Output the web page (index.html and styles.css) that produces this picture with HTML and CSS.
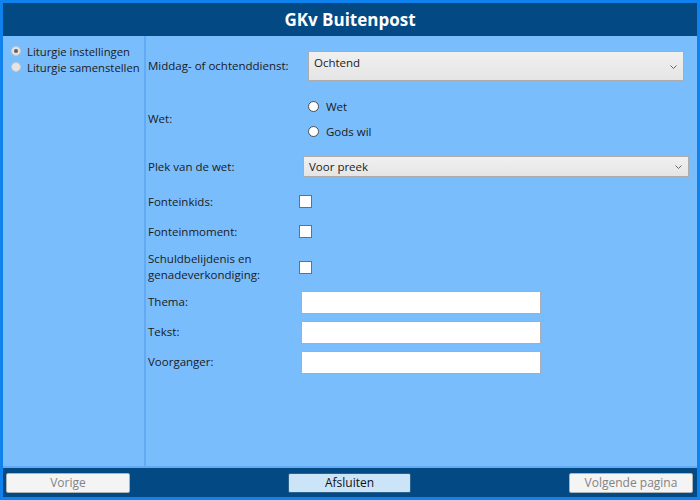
FILE: index.html
```html
<!DOCTYPE html>
<html lang="nl">
<head>
  <meta charset="UTF-8">
  <title>GKv Buitenpost</title>
  <link rel="stylesheet" href="styles.css">
</head>
<body>
  <div class="window">
    <header class="titlebar">GKv Buitenpost</header>

    <div class="content">
      <nav class="sidebar">
        <div class="navitem"><span class="dot checked"></span>Liturgie instellingen</div>
        <div class="navitem"><span class="dot"></span>Liturgie samenstellen</div>
      </nav>

      <main class="form">
        <div class="row r-dienst">
          <span class="label">Middag- of ochtenddienst:</span>
          <div class="combo combo-dienst">
            <span>Ochtend</span>
            <svg class="chev" width="7" height="4" viewBox="0 0 7 4"><path d="M0.5 0.5 L3.5 3.5 L6.5 0.5" fill="none" stroke="#666" stroke-width="1"/></svg>
          </div>
        </div>

        <div class="row r-wet">
          <span class="label">Wet:</span>
          <div class="radios">
            <div class="opt"><span class="radio"></span>Wet</div>
            <div class="opt"><span class="radio"></span>Gods wil</div>
          </div>
        </div>

        <div class="row r-plek">
          <span class="label">Plek van de wet:</span>
          <div class="combo combo-plek">
            <span>Voor preek</span>
            <svg class="chev" width="7" height="4" viewBox="0 0 7 4"><path d="M0.5 0.5 L3.5 3.5 L6.5 0.5" fill="none" stroke="#666" stroke-width="1"/></svg>
          </div>
        </div>

        <div class="row r-kids">
          <span class="label">Fonteinkids:</span>
          <span class="check"></span>
        </div>

        <div class="row r-moment">
          <span class="label">Fonteinmoment:</span>
          <span class="check"></span>
        </div>

        <div class="row r-schuld">
          <span class="label">Schuldbelijdenis en<br>genadeverkondiging:</span>
          <span class="check"></span>
        </div>

        <div class="row r-text">
          <span class="label">Thema:</span>
          <span class="textbox"></span>
        </div>

        <div class="row r-text">
          <span class="label">Tekst:</span>
          <span class="textbox"></span>
        </div>

        <div class="row r-text">
          <span class="label">Voorganger:</span>
          <span class="textbox"></span>
        </div>
      </main>
    </div>

    <footer class="buttons">
      <button class="btn" disabled>Vorige</button>
      <button class="btn primary">Afsluiten</button>
      <button class="btn" disabled>Volgende pagina</button>
    </footer>
  </div>
</body>
</html>
```

FILE: styles.css
```css
body {
  margin: 0;
  font-family: 'Open Sans', 'Noto Sans', sans-serif;
  font-size: 11.5px;
  color: #1b1b1b;
}
.window {
  width: 700px;
  height: 500px;
  box-sizing: border-box;
  border: 3px solid #0f82ee;
  display: flex;
  flex-direction: column;
  background: #7abdfd;
}
.titlebar {
  height: 33px;
  background: #034a85;
  color: white;
  font-weight: bold;
  font-size: 17px;
  display: flex;
  align-items: center;
  justify-content: center;
}
.content {
  flex: 1;
  display: flex;
}
.sidebar {
  width: 143px;
  flex-shrink: 0;
  border-right: 2px solid #62aaf3;
  padding: 7px 0 0 8px;
  box-sizing: border-box;
  font-size: 11.3px;
}
.navitem {
  display: flex;
  align-items: center;
  height: 16px;
}
.dot {
  width: 10px;
  height: 10px;
  border-radius: 50%;
  background: #e4e4e4;
  border: 1px solid #c8c8c8;
  margin-right: 6px;
  box-sizing: border-box;
  display: flex;
  align-items: center;
  justify-content: center;
}
.dot.checked::after {
  content: '';
  width: 4px;
  height: 4px;
  border-radius: 50%;
  background: #606060;
}
.form {
  flex: 1;
  padding: 10px 0 0 2px;
}
.row {
  display: flex;
  align-items: center;
}
.label {
  width: 151px;
  flex-shrink: 0;
  line-height: 16px;
}
.r-dienst { height: 40px; }
.r-wet { height: 50px; margin-top: 8px; }
.r-plek { height: 31px; margin-top: 7px; }
.r-kids { height: 29px; margin-top: 5px; }
.r-moment { height: 31px; }
.r-schuld { height: 40px; }
.r-text { height: 30px; }
.combo {
  box-sizing: border-box;
  border: 1px solid #acacac;
  background: linear-gradient(#f0f0f0, #e5e5e5);
  display: flex;
  justify-content: space-between;
  padding: 0 6px 0 5px;
}
.combo-dienst {
  width: 376px;
  height: 30px;
  margin-left: 9px;
  padding-top: 3px;
}
.combo-dienst .chev {
  margin-top: 10px;
}
.combo-plek {
  width: 386px;
  height: 21px;
  margin-left: 4px;
  align-items: center;
}
.radios {
  margin-left: 9px;
}
.opt {
  display: flex;
  align-items: center;
  height: 25px;
}
.radio {
  width: 11px;
  height: 11px;
  border-radius: 50%;
  border: 1px solid #4d4d4d;
  background: white;
  box-sizing: border-box;
  margin-right: 7px;
}
.check {
  width: 13px;
  height: 13px;
  box-sizing: border-box;
  border: 1px solid #6f6f6f;
  background: white;
}
.textbox {
  width: 240px;
  height: 23px;
  margin-left: 2px;
  box-sizing: border-box;
  border: 1px solid #abadb3;
  background: white;
}
.buttons {
  height: 31px;
  box-sizing: border-box;
  border-top: 2px solid #62aaf3;
  background: #034a85;
  display: flex;
  align-items: center;
  justify-content: space-between;
  padding: 0 4px 0 3px;
}
.btn {
  width: 124px;
  height: 20px;
  font-family: inherit;
  font-size: 12px;
  padding: 0;
  border: 1px solid #adb2b5;
  border-radius: 2px;
  background: #f4f4f4;
  color: #838383;
}
.btn.primary {
  width: 123px;
  background: #cce4f7;
  border-color: #2c628b;
  color: #111;
}
```
